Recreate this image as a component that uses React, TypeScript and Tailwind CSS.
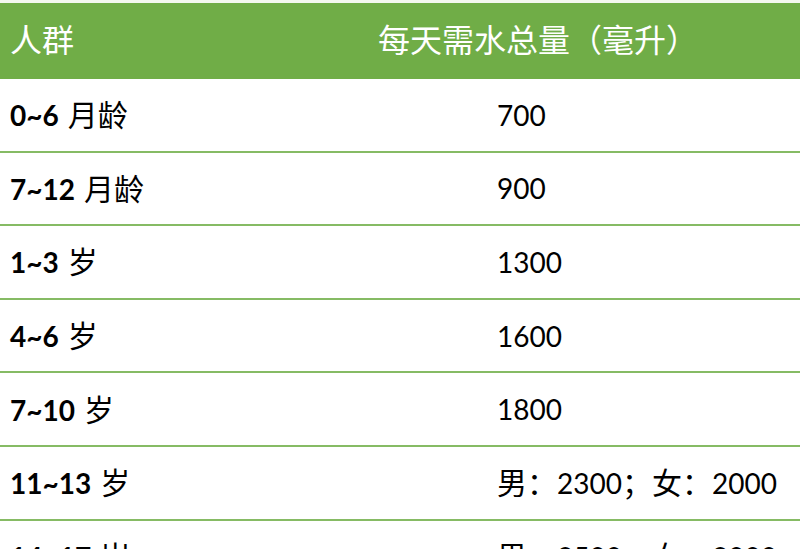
import React from 'react';

// Chinese glyphs sit a touch larger than the Latin digits in the source table
const Zh = ({ children }: { children: React.ReactNode }) => (
  <span className="text-[30px]">{children}</span>
);

const Split = ({ m, f }: { m: string; f: string }) => (
  <>
    <Zh>男：</Zh>
    {m}
    <Zh>；女：</Zh>
    {f}
  </>
);

const rows: { age: string; unit: string; amount: React.ReactNode }[] = [
  { age: '0~6', unit: '月龄', amount: '700' },
  { age: '7~12', unit: '月龄', amount: '900' },
  { age: '1~3', unit: '岁', amount: '1300' },
  { age: '4~6', unit: '岁', amount: '1600' },
  { age: '7~10', unit: '岁', amount: '1800' },
  { age: '11~13', unit: '岁', amount: <Split m="2300" f="2000" /> },
  { age: '14~17', unit: '岁', amount: <Split m="2500" f="2000" /> },
];

export default function App() {
  return (
    <div
      className="w-[800px] h-[549px] overflow-hidden bg-white text-black"
      style={{ fontFamily: "Lato, 'Noto Sans CJK SC', sans-serif" }}
    >
      {/* header */}
      <div className="pt-[3px] bg-[#f3f8ef]">
        <div className="h-[76px] pb-[2px] bg-[#70ad47] flex items-center text-white text-[32px] font-normal">
          <div className="w-[378px] pl-[10px]">人群</div>
          <div>每天需水总量（毫升）</div>
        </div>
      </div>

      {rows.map((r) => (
        <div
          key={r.age}
          className="h-[73.6px] flex items-center border-b-2 border-[#86bb64]"
        >
          <div className="w-[497px] pl-[10px] flex items-baseline">
            <span className="font-bold text-[28px]">{r.age}</span>
            <span className="ml-[9px] text-[30px]">{r.unit}</span>
          </div>
          <div className="text-[28px] flex items-baseline">{r.amount}</div>
        </div>
      ))}
    </div>
  );
}
